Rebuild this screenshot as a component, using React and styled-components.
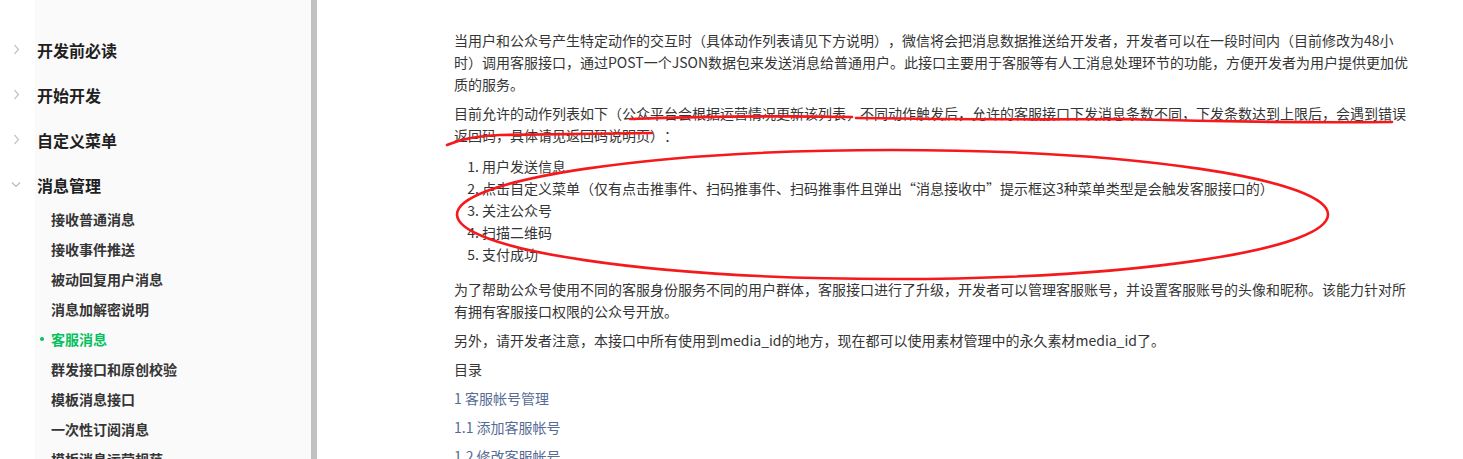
import React from 'react';
import styled, { createGlobalStyle } from 'styled-components';

const GlobalStyle = createGlobalStyle`
  html, body {
    margin: 0;
    height: 100%;
    overflow: hidden;
    background: #fff;
  }
  body {
    font-family: "Noto Sans CJK SC", "Noto Sans", sans-serif;
    color: #353535;
  }
`;

const Page = styled.div`
  position: relative;
  display: flex;
  height: 100vh;
  overflow: hidden;
`;

const Sidebar = styled.aside`
  width: 311px;
  flex-shrink: 0;
  padding-left: 35px;
  box-sizing: border-box;
  background: #fff;
`;

const Nav = styled.nav`
  height: 100%;
  background: #fafafa;
  padding-top: 27px;
  box-sizing: border-box;
`;

const Scrollbar = styled.div`
  width: 6px;
  flex-shrink: 0;
  background: #c1c1c1;
`;

const GroupRow = styled.div`
  display: flex;
  align-items: center;
  height: 45px;
  margin-left: -35px;
  font-size: 16px;
  font-weight: 700;
  color: #1f1f1f;
`;

const Caret = styled.span`
  width: 37px;
  display: flex;
  padding-left: ${(p) => (p.$open ? '11px' : '13px')};
  box-sizing: border-box;
  svg {
    display: block;
  }
`;

const SubList = styled.ul`
  list-style: none;
  margin: -3px 0 0;
  padding: 0;
`;

const SubItem = styled.li`
  position: relative;
  height: 30px;
  line-height: 30px;
  padding-left: 16px;
  font-size: 14px;
  font-weight: 700;
  white-space: nowrap;
  color: ${(p) => (p.$active ? '#07c160' : '#353535')};
  &::before {
    content: '';
    display: ${(p) => (p.$active ? 'block' : 'none')};
    position: absolute;
    left: 5px;
    top: 13px;
    width: 4px;
    height: 4px;
    border-radius: 50%;
    background: #07c160;
  }
`;

const Main = styled.main`
  flex: 1;
  padding: 29px 0 0 137px;
  box-sizing: border-box;
`;

const Article = styled.article`
  width: 958px;
  font-size: 14px;
  line-height: 22px;
  color: #353535;
  text-spacing-trim: space-all;
`;

const Para = styled.p`
  margin: 0 0 7px;
`;

const Steps = styled.ol`
  margin: 9px 0 13px;
  padding-left: 28px;
  & li {
    line-height: 22px;
  }
`;

const TocLink = styled.a`
  color: #576b95;
  text-decoration: none;
`;

const Marks = styled.svg`
  position: absolute;
  left: 0;
  top: 0;
  pointer-events: none;
`;

function Chevron({ open }) {
  return open ? (
    <svg width="10" height="7" viewBox="0 0 10 7">
      <polyline points="1,1.5 5,5.5 9,1.5" fill="none" stroke="#b8b8b8" strokeWidth="1.2" />
    </svg>
  ) : (
    <svg width="7" height="11" viewBox="0 0 7 11">
      <polyline points="1.5,1 5.5,5.5 1.5,10" fill="none" stroke="#c4c4c4" strokeWidth="1.2" />
    </svg>
  );
}

const groups = ['开发前必读', '开始开发', '自定义菜单'];

const subs = [
  '接收普通消息',
  '接收事件推送',
  '被动回复用户消息',
  '消息加解密说明',
  '客服消息',
  '群发接口和原创校验',
  '模板消息接口',
  '一次性订阅消息',
  '模板消息运营规范',
];

const steps = [
  '用户发送信息',
  '点击自定义菜单（仅有点击推事件、扫码推事件、扫码推事件且弹出“消息接收中”提示框这3种菜单类型是会触发客服接口的）',
  '关注公众号',
  '扫描二维码',
  '支付成功',
];

export default function App() {
  return (
    <>
      <GlobalStyle />
      <Page>
        <Sidebar>
          <Nav>
            {groups.map((g) => (
              <GroupRow key={g}>
                <Caret>
                  <Chevron />
                </Caret>
                {g}
              </GroupRow>
            ))}
            <GroupRow>
              <Caret $open>
                <Chevron open />
              </Caret>
              消息管理
            </GroupRow>
            <SubList>
              {subs.map((s) => (
                <SubItem key={s} $active={s === '客服消息'}>
                  {s}
                </SubItem>
              ))}
            </SubList>
          </Nav>
        </Sidebar>
        <Scrollbar />
        <Main>
          <Article>
            <Para>
              当用户和公众号产生特定动作的交互时（具体动作列表请见下方说明），微信将会把消息数据推送给开发者，开发者可以在一段时间内（目前修改为48小时）调用客服接口，通过POST一个JSON数据包来发送消息给普通用户。此接口主要用于客服等有人工消息处理环节的功能，方便开发者为用户提供更加优质的服务。
            </Para>
            <Para>
              目前允许的动作列表如下（公众平台会根据运营情况更新该列表，不同动作触发后，允许的客服接口下发消息条数不同，下发条数达到上限后，会遇到错误返回码，具体请见返回码说明页）：
            </Para>
            <Steps>
              {steps.map((s) => (
                <li key={s}>{s}</li>
              ))}
            </Steps>
            <Para>
              为了帮助公众号使用不同的客服身份服务不同的用户群体，客服接口进行了升级，开发者可以管理客服账号，并设置客服账号的头像和昵称。该能力针对所有拥有客服接口权限的公众号开放。
            </Para>
            <Para>
              另外，请开发者注意，本接口中所有使用到media_id的地方，现在都可以使用素材管理中的永久素材media_id了。
            </Para>
            <Para>目录</Para>
            <Para>
              <TocLink href="#1">1 客服帐号管理</TocLink>
            </Para>
            <Para>
              <TocLink href="#1.1">1.1 添加客服帐号</TocLink>
            </Para>
            <Para>
              <TocLink href="#1.2">1.2 修改客服帐号</TocLink>
            </Para>
          </Article>
        </Main>
        <Marks width="1463" height="459" viewBox="0 0 1463 459">
          <g fill="none" stroke="#f5191b" strokeWidth="2.6" strokeLinecap="round">
            <path d="M630 119 Q 745 115 852 117 M856 118 Q 1000 120 1122 119 Q 1260 123 1392 122" />
            <path d="M447 145 Q 468 136 500 135 L 652 133" />
            <ellipse cx="892.5" cy="214.5" rx="435.5" ry="64.5" />
          </g>
        </Marks>
      </Page>
    </>
  );
}
